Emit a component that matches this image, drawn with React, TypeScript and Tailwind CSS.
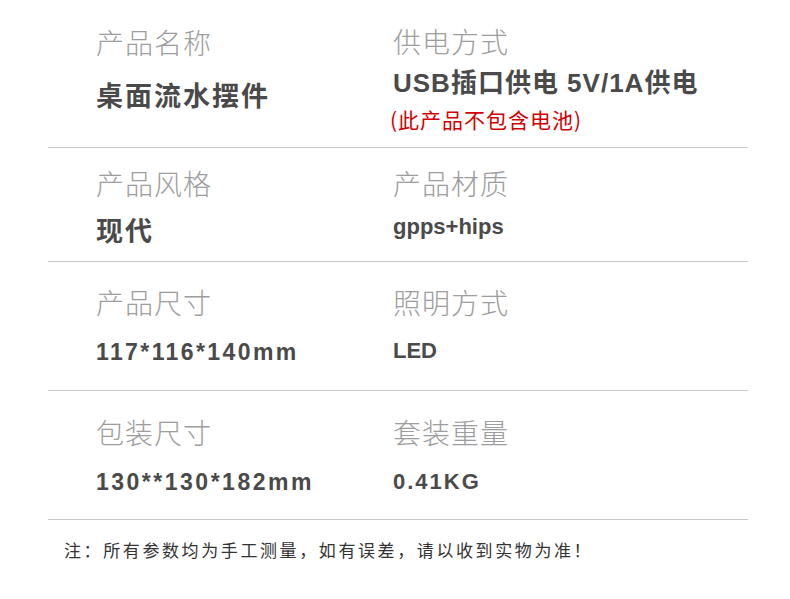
import React from "react";

const cjk = "font-['Noto_Sans_CJK_SC','Noto_Sans',sans-serif]";
const latin = "font-['Liberation_Sans','Noto_Sans_CJK_SC',sans-serif]";

const Label = ({ children }: { children: React.ReactNode }) => (
  <div className={`${cjk} text-[28px] leading-[36px] font-light text-[#9d9d9d] tracking-[1px]`}>
    {children}
  </div>
);

const Value = ({ children, className = "" }: { children: React.ReactNode; className?: string }) => (
  <div className={`font-bold text-[#4a4a4a] ${className}`}>{children}</div>
);

const App = () => {
  return (
    <div className="w-[790px] h-[599px] bg-white overflow-hidden">
      <div className="mx-[48px] w-[700px]">
        {/* Row 1 */}
        <div className="h-[148px] border-b border-[#c9c9c9] grid grid-cols-[345px_1fr]">
          <div className="pl-[48px] pt-[24px]">
            <Label>产品名称</Label>
            <Value className={`${cjk} mt-[17px] text-[27px] leading-[36px] tracking-[2px]`}>桌面流水摆件</Value>
          </div>
          <div className="pt-[23px]">
            <Label>供电方式</Label>
            <Value className={`${latin} mt-[8px] text-[26px] leading-[32px] tracking-[1px]`}>USB插口供电 5V/1A供电</Value>
            <div className={`${cjk} -ml-[3px] mt-[8px] text-[21px] leading-[24px] tracking-[1px] text-[#d10000]`}>
              (此产品不包含电池)
            </div>
          </div>
        </div>

        {/* Row 2 */}
        <div className="h-[114px] border-b border-[#c9c9c9] grid grid-cols-[345px_1fr]">
          <div className="pl-[48px] pt-[17px]">
            <Label>产品风格</Label>
            <Value className={`${cjk} mt-[11px] text-[27px] leading-[36px] tracking-[2px]`}>现代</Value>
          </div>
          <div className="pt-[17px]">
            <Label>产品材质</Label>
            <Value className={`${latin} mt-[8px] text-[22px] leading-[36px]`}>gpps+hips</Value>
          </div>
        </div>

        {/* Row 3 */}
        <div className="h-[129px] border-b border-[#c9c9c9] grid grid-cols-[345px_1fr]">
          <div className="pl-[48px] pt-[22px]">
            <Label>产品尺寸</Label>
            <Value className={`${latin} mt-[14px] text-[23px] leading-[36px] tracking-[2.4px]`}>117*116*140mm</Value>
          </div>
          <div className="pt-[22px]">
            <Label>照明方式</Label>
            <Value className={`${latin} mt-[13px] text-[22px] leading-[36px]`}>LED</Value>
          </div>
        </div>

        {/* Row 4 */}
        <div className="h-[129px] border-b border-[#c9c9c9] grid grid-cols-[345px_1fr]">
          <div className="pl-[48px] pt-[23px]">
            <Label>包装尺寸</Label>
            <Value className={`${latin} mt-[14px] text-[23px] leading-[36px] tracking-[2.5px]`}>130**130*182mm</Value>
          </div>
          <div className="pt-[23px]">
            <Label>套装重量</Label>
            <Value className={`${latin} mt-[14px] text-[22px] leading-[36px] tracking-[2px]`}>0.41KG</Value>
          </div>
        </div>

        {/* Note */}
        <div className={`${cjk} pl-[16px] pt-[18px] text-[17px] leading-[24px] tracking-[2.6px] text-[#333333]`}>
          注：所有参数均为手工测量，如有误差，请以收到实物为准！
        </div>
      </div>
    </div>
  );
};

export default App;
